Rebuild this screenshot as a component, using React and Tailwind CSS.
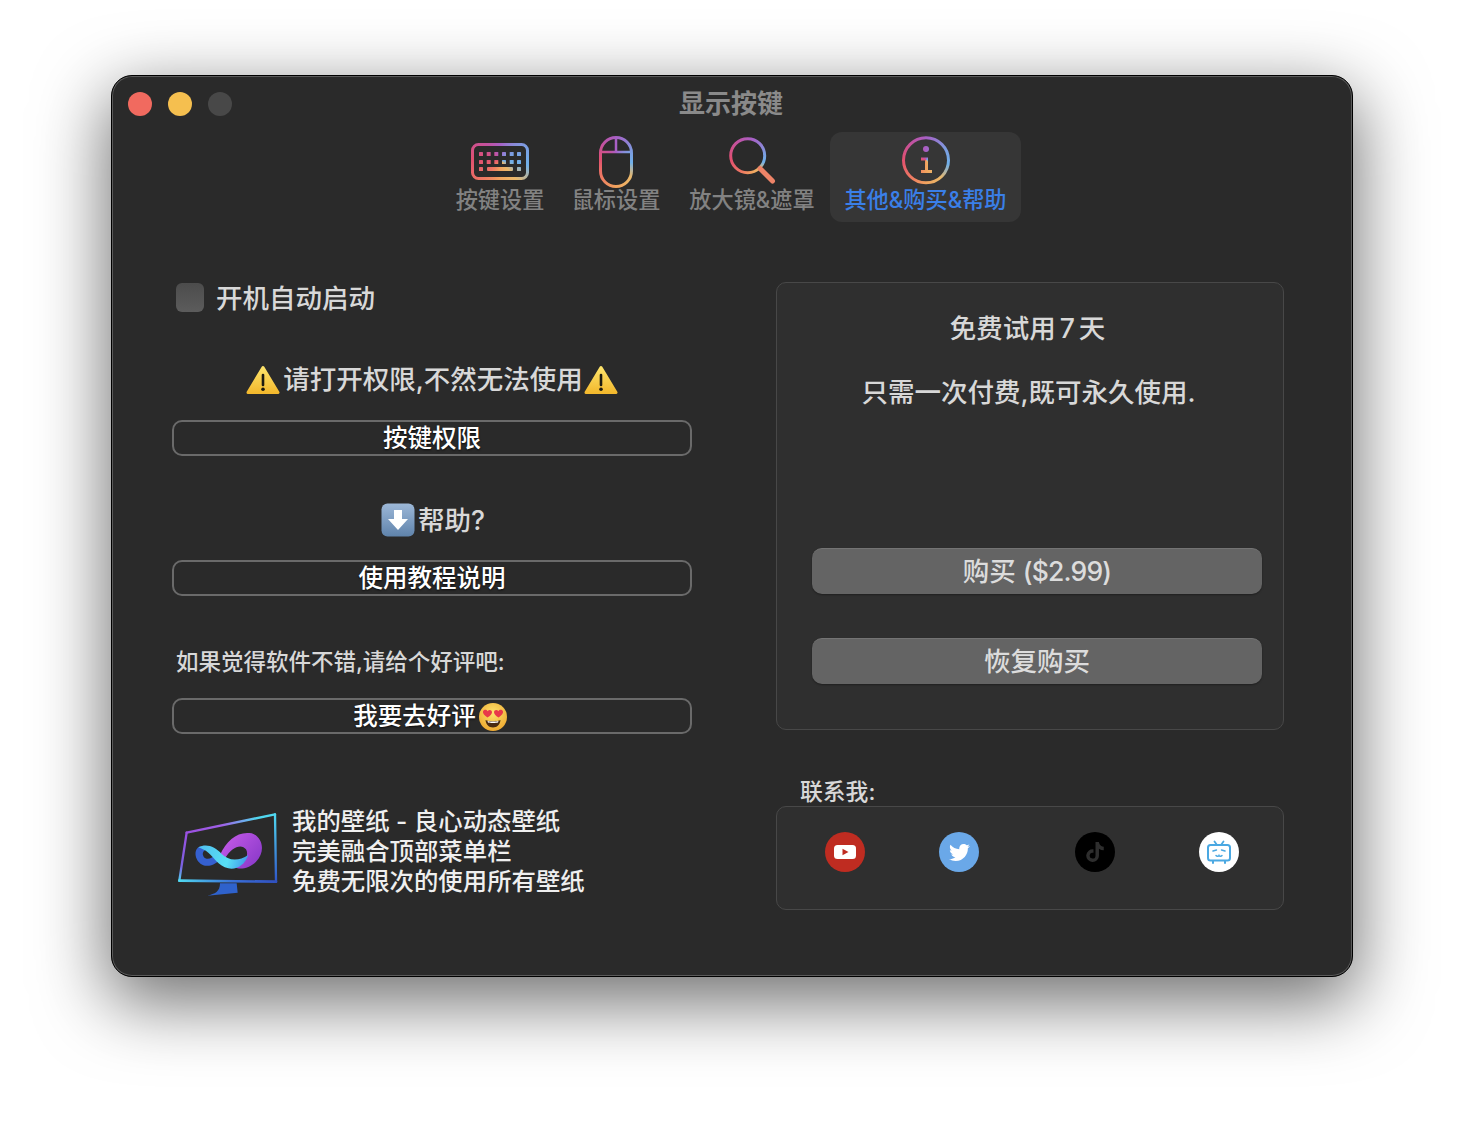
import { FaTwitter, FaTiktok } from 'react-icons/fa'

function ConicIcon({ id, children, extra }) {
  return (
    <svg width="60" height="56" viewBox="0 0 60 56" fill="none" className="block shrink-0">
      <mask id={id} maskUnits="userSpaceOnUse" x="0" y="0" width="60" height="56">
        {children}
      </mask>
      <g mask={`url(#${id})`}>
        <foreignObject x="0" y="0" width="60" height="56">
          <div className="w-full h-full bg-[conic-gradient(#a85fc5_0deg,#7d9ce0_60deg,#6fb0ea_100deg,#eab86a_140deg,#f1a35e_180deg,#ee7a62_220deg,#e2506f_270deg,#c2529f_320deg,#a85fc5_360deg)]" />
        </foreignObject>
      </g>
      {extra}
    </svg>
  )
}

function KeyboardIcon() {
  const xs = [11, 18.7, 26.3, 34, 41.7, 49]
  return (
    <ConicIcon id="kb">
      <rect x="2.5" y="12.5" width="55" height="34" rx="6" stroke="white" strokeWidth="3" />
      {xs.map((x) => <rect key={`a${x}`} x={x - 2} y="20" width="4" height="4" rx="0.6" fill="white" />)}
      {xs.map((x) => <rect key={`b${x}`} x={x - 2} y="28" width="4" height="4" rx="0.6" fill="white" />)}
      <rect x="9" y="35" width="4" height="4" rx="0.6" fill="white" />
      <rect x="17" y="35" width="26" height="4" rx="1" fill="white" />
      <rect x="47" y="35" width="4" height="4" rx="0.6" fill="white" />
    </ConicIcon>
  )
}

function MouseIcon() {
  return (
    <ConicIcon id="ms">
      <rect x="14.5" y="5.5" width="31" height="49" rx="15.5" stroke="white" strokeWidth="3" />
      <path d="M15 20H45M30 6V20" stroke="white" strokeWidth="2.5" />
    </ConicIcon>
  )
}

function SearchIcon() {
  return (
    <ConicIcon
      id="sr"
      extra={<path d="M38 36.5L50.5 49" stroke="#ee8468" strokeWidth="5" strokeLinecap="round" />}
    >
      <circle cx="25.7" cy="23.7" r="17" stroke="white" strokeWidth="3" />
    </ConicIcon>
  )
}

function InfoIcon() {
  return (
    <ConicIcon id="inf">
      <circle cx="30" cy="28.3" r="22.5" stroke="white" strokeWidth="3" />
      <circle cx="30" cy="17" r="3" fill="white" />
      <path d="M25 27H30.5V39M25 39.5H36" stroke="white" strokeWidth="3" />
    </ConicIcon>
  )
}

function WarningEmoji() {
  return (
    <svg width="34" height="30" viewBox="0 0 34 30" className="block shrink-0">
      <defs>
        <linearGradient id="warn" x1="0" y1="0" x2="0" y2="1">
          <stop offset="0" stopColor="#fde36a" />
          <stop offset="1" stopColor="#f3b92e" />
        </linearGradient>
      </defs>
      <path d="M17 2.5L32 27.5H2Z" fill="url(#warn)" stroke="url(#warn)" strokeWidth="3" strokeLinejoin="round" />
      <path d="M17 10V20" stroke="#1d1a10" strokeWidth="2.6" strokeLinecap="round" />
      <circle cx="17" cy="24.3" r="1.8" fill="#1d1a10" />
    </svg>
  )
}

function DownArrowEmoji() {
  return (
    <svg width="34" height="34" viewBox="0 0 34 34" className="block shrink-0">
      <defs>
        <linearGradient id="arrowbg" x1="0" y1="0" x2="0" y2="1">
          <stop offset="0" stopColor="#9db8d8" />
          <stop offset="1" stopColor="#5f83ab" />
        </linearGradient>
      </defs>
      <rect x="0.5" y="0.5" width="33" height="33" rx="6" fill="url(#arrowbg)" />
      <path d="M13 7H21V16H27L17 27L7 16H13Z" fill="white" />
    </svg>
  )
}

function HeartEyes() {
  return (
    <svg width="28" height="28" viewBox="0 0 28 28" className="block shrink-0">
      <defs>
        <radialGradient id="face" cx="0.5" cy="0.35" r="0.7">
          <stop offset="0" stopColor="#fde26c" />
          <stop offset="1" stopColor="#eda52c" />
        </radialGradient>
      </defs>
      <circle cx="14" cy="14" r="14" fill="url(#face)" />
      <path d="M8.4 14.6C5 12.2 3.6 10.4 4 8.6C4.5 6.4 7.4 6 8.6 8.2C10 6.2 12.8 6.8 13 9C13.2 10.8 11.4 12.6 8.4 14.6Z" fill="#e8384a" />
      <path d="M19.6 14.6C23 12.2 24.4 10.4 24 8.6C23.5 6.4 20.6 6 19.4 8.2C18 6.2 15.2 6.8 15 9C14.8 10.8 16.6 12.6 19.6 14.6Z" fill="#e8384a" />
      <path d="M6.5 17C9 18.6 19 18.6 21.5 17C21 21.8 18 24.5 14 24.5C10 24.5 7 21.8 6.5 17Z" fill="#4a2a12" />
      <path d="M8.5 18C11 18.8 17 18.8 19.5 18L19 19.6C17 20.2 11 20.2 9 19.6Z" fill="#fff" />
    </svg>
  )
}

function WallpaperLogo() {
  return (
    <svg width="104" height="88" viewBox="18 63 312 264" fill="none" className="block shrink-0">
      <defs>
        <linearGradient id="ftop" x1="50" y1="128" x2="315" y2="73" gradientUnits="userSpaceOnUse">
          <stop offset="0" stopColor="#9a50e0" />
          <stop offset="0.4" stopColor="#a060e8" />
          <stop offset="0.8" stopColor="#50d8f0" />
          <stop offset="1" stopColor="#50d8f0" />
        </linearGradient>
        <linearGradient id="fleft" x1="50" y1="128" x2="28" y2="272" gradientUnits="userSpaceOnUse">
          <stop offset="0" stopColor="#9a50e0" />
          <stop offset="0.7" stopColor="#7a60e0" />
          <stop offset="1" stopColor="#50d0f0" />
        </linearGradient>
        <linearGradient id="fbot" x1="28" y1="272" x2="318" y2="275" gradientUnits="userSpaceOnUse">
          <stop offset="0" stopColor="#50d8f0" />
          <stop offset="0.55" stopColor="#3a70d8" />
          <stop offset="1" stopColor="#3050c0" />
        </linearGradient>
        <linearGradient id="fright" x1="315" y1="73" x2="318" y2="275" gradientUnits="userSpaceOnUse">
          <stop offset="0" stopColor="#50d8f0" />
          <stop offset="1" stopColor="#2f55c8" />
        </linearGradient>
        <linearGradient id="lobe" x1="160" y1="140" x2="270" y2="230" gradientUnits="userSpaceOnUse">
          <stop offset="0" stopColor="#c45ae8" />
          <stop offset="1" stopColor="#8838c8" />
        </linearGradient>
        <linearGradient id="ribbon" x1="85" y1="175" x2="235" y2="225" gradientUnits="userSpaceOnUse">
          <stop offset="0" stopColor="#50c0f0" />
          <stop offset="0.6" stopColor="#58e0f4" />
          <stop offset="1" stopColor="#3f90e8" />
        </linearGradient>
      </defs>
      <path d="M150 280H200L203 308L112 317C135 312 150 305 150 280Z" fill="#2f62cc" />
      <path d="M50 128L315 73" stroke="url(#ftop)" strokeWidth="7" strokeLinecap="round" />
      <path d="M50 128L28 272" stroke="url(#fleft)" strokeWidth="7" strokeLinecap="round" />
      <path d="M315 73L318 275" stroke="url(#fright)" strokeWidth="7" strokeLinecap="round" />
      <path d="M28 272L318 275" stroke="url(#fbot)" strokeWidth="8" strokeLinecap="round" />
      <path d="M150 195C170 150 205 122 245 130C278 140 288 185 258 215C238 235 210 240 195 232C225 225 238 195 228 178C215 160 185 170 165 205Z" fill="url(#lobe)" />
      <path d="M85 172C68 185 78 222 105 227C127 230 142 217 152 207L138 192C125 208 108 210 101 200C95 190 100 182 110 178C100 168 92 168 85 172Z" fill="#3560d0" />
      <path d="M85 172C110 160 135 170 155 192C175 212 205 215 235 195C225 225 200 240 175 235C145 228 130 200 115 188C105 180 95 176 85 172Z" fill="url(#ribbon)" />
    </svg>
  )
}

function YoutubeDot() {
  return (
    <div className="w-[40px] h-[40px] rounded-full bg-[#bf2c21] flex items-center justify-center">
      <svg width="22" height="14" viewBox="0 0 22 14">
        <rect width="22" height="14" rx="3.5" fill="white" />
        <path d="M8.5 3.8L14.5 7L8.5 10.2Z" fill="#bf2c21" />
      </svg>
    </div>
  )
}

function BilibiliDot() {
  return (
    <div className="w-[40px] h-[40px] rounded-full bg-white flex items-center justify-center">
      <svg width="26" height="26" viewBox="0 0 26 26" fill="none" stroke="#4aa8e2" strokeLinecap="round">
        <path d="M8.5 2.5L11 6M17.5 2.5L15 6" strokeWidth="1.8" />
        <rect x="2" y="6" width="22" height="15.5" rx="2.5" strokeWidth="2" />
        <path d="M7 22.5V24M19 22.5V24" strokeWidth="2" />
        <path d="M7 12L10.5 11M19 12L15.5 11M10 16.5C11 17.8 12.5 17.5 13 16.5C13.5 17.5 15 17.8 16 16.5" strokeWidth="1.5" />
      </svg>
    </div>
  )
}

function Tab({ width, icon, label, active }) {
  return (
    <div className={`${width} h-[90px] flex flex-col items-center rounded-xl ${active ? 'bg-[#363636] text-[#3a7fe8]' : 'text-[#828282]'}`}>
      {icon}
      <span className="text-[22.2px] leading-[24px] font-medium whitespace-nowrap">{label}</span>
    </div>
  )
}

function OutlineButton({ className, children }) {
  return (
    <button className={`w-[520px] h-[36px] pt-px rounded-[10px] border-2 border-[#6a6a6a] flex items-center justify-center text-[24.5px] leading-none text-white font-medium [text-shadow:0_1px_2px_rgba(0,0,0,0.8)] ${className}`}>
      {children}
    </button>
  )
}

function GrayButton({ className, children }) {
  return (
    <button className={`ml-[35px] w-[450px] h-[46px] rounded-[10px] bg-[#646464] border-t border-[#747474] shadow-[0_1px_2px_rgba(0,0,0,0.35)] text-[26.5px] leading-none font-medium text-[#dcdcdc] flex items-center justify-center ${className}`}>
      {children}
    </button>
  )
}

export default function App() {
  return (
    <div className="w-[1464px] h-[1124px] bg-white overflow-hidden pt-[75px] flex justify-center font-['Inter','Noto_Sans_CJK_SC',sans-serif]">
      <div className="w-[1242px] h-[902px] rounded-[21px] bg-[#2a2a2a] border border-black shadow-[inset_0_0_0_1px_#5a5a5a,0_22px_70px_4px_rgba(0,0,0,0.56)] flex flex-col">

        {/* Barra de título */}
        <div className="h-[56px] grid grid-cols-[1fr_auto_1fr] items-start pt-[16px] pl-[16px]">
          <div className="flex gap-4">
            <div className="w-6 h-6 rounded-full bg-[#f16a5f]" />
            <div className="w-6 h-6 rounded-full bg-[#f5bf4f]" />
            <div className="w-6 h-6 rounded-full bg-[#484848]" />
          </div>
          <p className="text-[26px] leading-[24px] font-bold text-[#8a8a8a] pr-[18px]">显示按键</p>
        </div>

        {/* Abas */}
        <div className="flex justify-center pr-px">
          <Tab width="w-[116px]" icon={<KeyboardIcon />} label="按键设置" />
          <Tab width="w-[116px]" icon={<MouseIcon />} label="鼠标设置" />
          <Tab width="w-[156px]" icon={<SearchIcon />} label="放大镜&遮罩" />
          <Tab width="w-[191px]" icon={<InfoIcon />} label="其他&购买&帮助" active />
        </div>

        <div className="flex pl-[60px] pt-[60px] gap-[84px]">

          {/* Coluna esquerda */}
          <div className="w-[520px] flex flex-col">
            <div className="mt-px flex items-center h-[29px] pl-[4px] gap-[12px]">
              <div className="w-[28px] h-[29px] rounded-md bg-linear-to-b from-[#4c4c4c] to-[#5c5c5c]" />
              <span className="text-[26.5px] leading-none pt-[2px] font-medium text-[#d8d8d8]">开机自动启动</span>
            </div>

            <div className="mt-[53px] h-[30px] flex items-center justify-center gap-[3px] text-[26.5px] font-medium text-[#d8d8d8]">
              <WarningEmoji />
              <span className="whitespace-nowrap">请打开权限,不然无法使用</span>
              <div className="-ml-[2px]"><WarningEmoji /></div>
            </div>
            <div className="mt-[25px]"><OutlineButton>按键权限</OutlineButton></div>

            <div className="mt-[47px] h-[34px] pl-[2px] flex items-center justify-center gap-[3px] text-[26.5px] font-medium text-[#d8d8d8]">
              <DownArrowEmoji />
              <span className="pt-px">帮助?</span>
            </div>
            <div className="mt-[23px]"><OutlineButton>使用教程说明</OutlineButton></div>

            <p className="mt-[51px] pl-[4px] pt-px h-[28px] text-[22.5px] leading-[28px] font-medium text-[#d8d8d8] whitespace-nowrap">如果觉得软件不错,请给个好评吧:</p>
            <div className="mt-[23px]">
              <OutlineButton className="pr-[4px]">
                <span>我要去好评</span>
                <span className="ml-[3px]"><HeartEyes /></span>
              </OutlineButton>
            </div>

            <div className="mt-[72px] flex items-start pl-[4px] gap-[12px]">
              <div className="mt-[5px]"><WallpaperLogo /></div>
              <div className="text-[24.4px] leading-[30px] font-medium text-[#efefef] whitespace-nowrap">
                <p>我的壁纸 - 良心动态壁纸</p>
                <p>完美融合顶部菜单栏</p>
                <p>免费无限次的使用所有壁纸</p>
              </div>
            </div>
          </div>

          {/* Coluna direita */}
          <div className="w-[508px] flex flex-col">
            <div className="h-[448px] rounded-[10px] bg-[#2f2f2f] border border-[#484848] pt-[30px] flex flex-col">
              <p className="text-[26.5px] leading-[30px] font-medium text-[#d8d8d8] text-center pr-[5px]">免费试用<span className="mx-[4px]">7</span>天</p>
              <p className="mt-[34px] text-[26.5px] leading-[30px] font-medium text-[#d8d8d8] text-center pr-[3px]">只需一次付费,既可永久使用.</p>
              <GrayButton className="mt-[141px]">
                <span>购买 <span className="tracking-[-0.8px]">($2.99)</span></span>
              </GrayButton>
              <GrayButton className="mt-[44px]">恢复购买</GrayButton>
            </div>

            <p className="mt-[48px] ml-[24px] h-[28px] text-[22.8px] leading-[28px] font-medium text-[#d8d8d8]">联系我:</p>

            <div className="h-[104px] rounded-[10px] bg-[#2f2f2f] border border-[#484848] flex items-start pt-[25px] pl-[48px]">
              <YoutubeDot />
              <div className="ml-[74px] w-[40px] h-[40px] rounded-full bg-[#6aa8e8] flex items-center justify-center">
                <FaTwitter size={21} color="white" />
              </div>
              <div className="ml-[96px] w-[40px] h-[40px] rounded-full bg-black flex items-center justify-center">
                <FaTiktok size={20} color="#2e2e2e" />
              </div>
              <div className="ml-[84px]"><BilibiliDot /></div>
            </div>
          </div>
        </div>
      </div>
    </div>
  )
}
